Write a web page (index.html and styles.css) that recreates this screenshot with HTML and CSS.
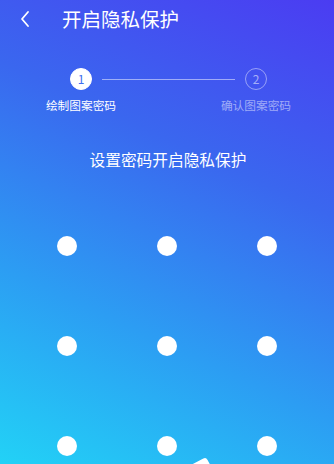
FILE: index.html
```html
<!DOCTYPE html>
<html lang="zh">
<head>
<meta charset="utf-8">
<title>开启隐私保护</title>
<link rel="stylesheet" href="styles.css">
</head>
<body>
<div class="screen">
  <header class="topbar">
    <svg class="back" width="12" height="18" viewBox="0 0 12 18"><path d="M9 2 L3 9 L9 16" fill="none" stroke="#fff" stroke-width="1.8" stroke-linecap="round" stroke-linejoin="round"/></svg>
    <h1 class="title">开启隐私保护</h1>
  </header>
  <div class="steps">
    <div class="step-row">
      <span class="num active">1</span>
      <span class="line"></span>
      <span class="num">2</span>
    </div>
    <div class="label-row">
      <span class="label active">绘制图案密码</span>
      <span class="label">确认图案密码</span>
    </div>
  </div>
  <p class="hint">设置密码开启隐私保护</p>
  <div class="pattern">
    <span class="dot"></span><span class="dot"></span><span class="dot"></span>
    <span class="dot"></span><span class="dot"></span><span class="dot"></span>
    <span class="dot"></span><span class="dot"></span><span class="dot"></span>
  </div>
  <div class="tip"></div>
</div>
</body>
</html>
```
FILE: styles.css
```css
* { box-sizing: border-box; }
html, body { margin: 0; padding: 0; }
body {
  width: 334px;
  height: 464px;
  overflow: hidden;
  font-family: "Noto Sans CJK SC", "Noto Sans", sans-serif;
  color: #fff;
}
.screen {
  position: relative;
  width: 334px;
  height: 464px;
  overflow: hidden;
  background: linear-gradient(205deg, #4b3cf2 0%, #3a67ef 35%, #2c9df3 68%, #22d2f6 100%);
}
.topbar {
  height: 38px;
  display: flex;
  align-items: center;
  padding-left: 19px;
}
.back { display: block; flex-shrink: 0; }
.title {
  margin: 0 0 0 31px;
  font-size: 19.5px;
  font-weight: 400;
  line-height: 24px;
  letter-spacing: 0;
}
.steps {
  margin-top: 30px;
  display: flex;
  flex-direction: column;
}
.step-row {
  display: flex;
  align-items: center;
  padding-left: 70px;
  height: 22px;
}
.num {
  flex-shrink: 0;
  width: 22px;
  height: 22px;
  border-radius: 50%;
  border: 1px solid rgba(255,255,255,0.45);
  display: flex;
  align-items: center;
  justify-content: center;
  font-size: 12px;
  color: rgba(255,255,255,0.55);
  line-height: 1;
}
.num.active {
  background: #fff;
  border-color: #fff;
  color: #3d6df0;
}
.line {
  flex-shrink: 0;
  width: 133px;
  height: 1px;
  margin: 0 10px;
  background: rgba(255,255,255,0.5);
}
.label-row {
  display: flex;
  padding-left: 41px;
  margin-top: 7px;
  gap: 95px;
}
.label {
  width: 80px;
  text-align: center;
  font-size: 11.7px;
  line-height: 16px;
  color: rgba(255,255,255,0.5);
}
.label.active { color: #fff; }
.hint {
  margin: 36px 0 0;
  text-align: center;
  font-size: 15.7px;
  line-height: 22px;
  padding-left: 2px;
}
.pattern {
  margin-top: 25px;
  padding-left: 17px;
  display: grid;
  grid-template-columns: repeat(3, 100px);
  grid-auto-rows: 100px;
}
.dot {
  align-self: center;
  justify-self: center;
  width: 20px;
  height: 20px;
  border-radius: 50%;
  background: #fff;
}
.tip {
  position: absolute;
  left: 206px;
  top: 457px;
  width: 30px;
  height: 30px;
  background: #fff;
  border-radius: 3px;
  transform-origin: 0 0;
  transform: rotate(62deg);
}
```
